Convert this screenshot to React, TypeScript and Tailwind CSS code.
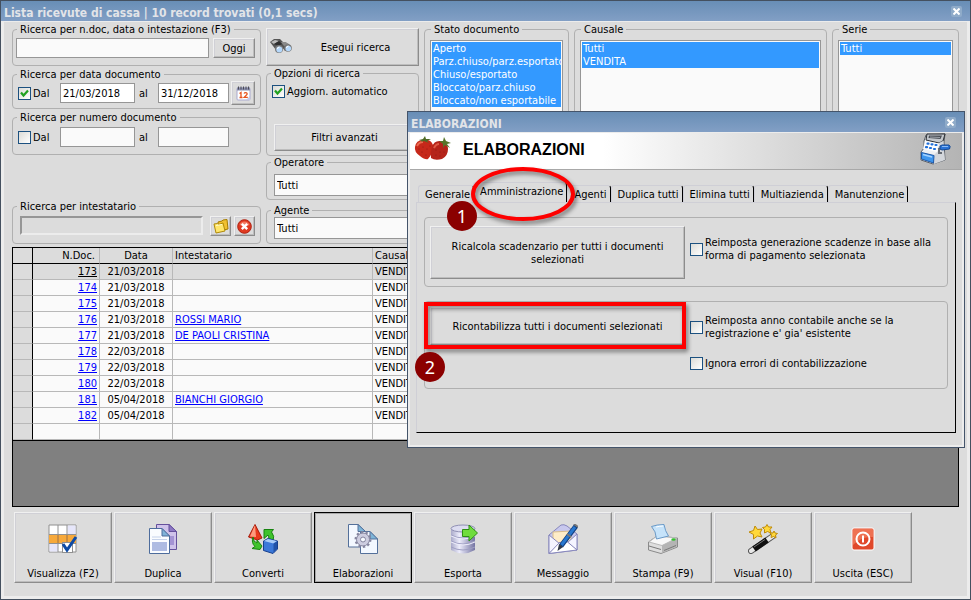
import React, { useState } from 'react';

interface Documento { numero: string; data: string; intestatario: string; }

const documenti: Documento[] = [
    { numero: "173", data: "21/03/2018", intestatario: "" },
    { numero: "174", data: "21/03/2018", intestatario: "" },
    { numero: "175", data: "21/03/2018", intestatario: "" },
    { numero: "176", data: "21/03/2018", intestatario: "ROSSI MARIO" },
    { numero: "177", data: "21/03/2018", intestatario: "DE PAOLI CRISTINA" },
    { numero: "178", data: "22/03/2018", intestatario: "" },
    { numero: "179", data: "22/03/2018", intestatario: "" },
    { numero: "180", data: "22/03/2018", intestatario: "" },
    { numero: "181", data: "05/04/2018", intestatario: "BIANCHI GIORGIO" },
    { numero: "182", data: "05/04/2018", intestatario: "" },
];

const stati = ["Aperto", "Parz.chiuso/parz.esportato", "Chiuso/esportato", "Bloccato/parz.chiuso", "Bloccato/non esportabile"];
const schede = ["Generale", "Amministrazione", "Agenti", "Duplica tutti", "Elimina tutti", "Multiazienda", "Manutenzione"];

const rilievo = 'border border-t-[#f0f0f0] border-l-[#f0f0f0] border-r-[#8c8c8c] border-b-[#8c8c8c] bg-[#dcdcdc] shadow-[inset_-1px_-1px_0_#bdbdbd,inset_1px_1px_0_#d0d0d6]';
const campo = 'border border-[#969696] bg-[#fafafa] outline-none';

// ---- icone ----

const IconaBinocolo = () => (
    <svg width="24" height="18" viewBox="0 0 24 18">
        <path d="M1 4 L5 1 L11 1 L14 4 L20 6 L22 11 L16 13 L13 9 L10 10 L7 12 L4 8 Z" fill="#555" />
        <path d="M2 4 L6 2 L10 3 L5 6 Z" fill="#bcbcbc" />
        <path d="M12 4 L17 4 L20 7 L15 8 Z" fill="#8a8a8a" />
        <path d="M5 6 L10 3 L13 6 L9 8 Z" fill="#2f2f2f" />
        <circle cx="10" cy="11" r="4" fill="#777" />
        <circle cx="10.300" cy="11.500" r="3" fill="#b5d8fb" />
        <circle cx="19" cy="10" r="3.800" fill="#777" />
        <circle cx="19.300" cy="10.500" r="2.800" fill="#b5d8fb" />
        <path d="M8.500 11 a2 2 0 0 1 2-2 M17.500 10 a2 2 0 0 1 2-2" stroke="#fff" fill="none" />
    </svg>
);

const IconaCalendario = () => (
    <svg width="15" height="15" viewBox="0 0 15 15">
        <rect x="1" y="2" width="13" height="12" rx="1" fill="#fff" stroke="#a9a9cf" />
        <rect x="1" y="1.500" width="13" height="3" fill="#8b8fae" />
        <path d="M2.500 0.500v3M5 0.500v3M7.500 0.500v3M10 0.500v3M12.500 0.500v3" stroke="#4b4b55" />
        <path d="M10 14 L14 10 V14 Z" fill="#c8c8e4" />
        <path d="M3.500 7.500 L5 6.500 V11.500 M3.500 11.500 H6.500" stroke="#e8541e" strokeWidth="1.300" fill="none" />
        <path d="M8 7.500 Q8.500 6.500 10 6.600 Q11.500 7 11 8.500 L8.200 11.400 H11.800" stroke="#e8541e" strokeWidth="1.300" fill="none" />
    </svg>
);

const IconaCartella = () => (
    <svg width="16" height="15" viewBox="0 0 16 15">
        <path d="M5 3 L9 2 L10 1 L14 0.500 L15 10 L6 12 Z" fill="#f0c030" stroke="#a67c00" />
        <path d="M1 5 L4.500 4.500 L5.500 5.500 L10 4 L12 12 L3 14 Z" fill="#ffe66b" stroke="#b08a08" />
        <path d="M3 6.500 L9 5.500" stroke="#fffbd0" />
    </svg>
);

const IconaAnnulla = () => (
    <svg width="15" height="15" viewBox="0 0 15 15">
        <circle cx="7.500" cy="7.500" r="6.800" fill="#e03a20" stroke="#b02010" />
        <path d="M2.500 6 A5.300 5.300 0 0 1 12.500 6 Q8 8 2.500 6Z" fill="#f27b62" />
        <path d="M4.800 4.800 L10.200 10.200 M10.200 4.800 L4.800 10.200" stroke="#fff" strokeWidth="2.400" />
    </svg>
);

const IconaFragole = () => (
    <svg width="38" height="26" viewBox="0 0 38 26">
        <path d="M1 11 Q2 4 9 4 Q17 3 19 9 Q20 16 14 23 Q11 24 6 20 Q0 16 1 11Z" fill="#c6281a" />
        <path d="M18 11 Q20 4 27 5 Q34 8 34 13 Q34 20 28 23 Q21 25 17 22 Q16 16 18 11Z" fill="#b5241a" />
        <path d="M3 10 Q5 6 9 6" stroke="#ea6a50" strokeWidth="2" fill="none" />
        <path d="M20 12 Q22 8 25 8" stroke="#df5a45" strokeWidth="2" fill="none" />
        <path d="M5 4 L9 3 L11 0 L12 3 L17 3 L13 5 L15 7 L10 5 L7 6 L8 5 Z" fill="#4e6a24" />
        <path d="M25 5 L29 5 L30 1 L32 5 L37 7 L33 8 L36 12 L31 9 L29 12 L29 8 Z" fill="#57752a" />
        <g fill="#8e1a12">
            <circle cx="5" cy="13" r="0.600" /><circle cx="9" cy="11" r="0.600" /><circle cx="8" cy="16" r="0.600" />
            <circle cx="13" cy="13" r="0.600" /><circle cx="12" cy="19" r="0.600" /><circle cx="16" cy="10" r="0.600" />
            <circle cx="22" cy="14" r="0.600" /><circle cx="26" cy="16" r="0.600" /><circle cx="22" cy="19" r="0.600" />
            <circle cx="30" cy="16" r="0.600" /><circle cx="26" cy="20" r="0.600" />
        </g>
    </svg>
);

const IconaCassa = () => (
    <svg width="32" height="32" viewBox="0 0 32 32">
        <path d="M6 2 L25 1 L24 9 L25 27 L13 31 L1 27 L1 19 L4 15 L4 8 Z" fill="#eef0f3" stroke="#5b6068" />
        <path d="M7 1 L25 1 L23 8 L19 10 L6 7 Z" fill="#c3c7cc" stroke="#2c2f33" />
        <path d="M9 2.500 L22 2.500 L20.500 6 L8.500 5 Z" fill="#4a4e55" />
        <path d="M10 4 L20 4.500" stroke="#9aa0a8" />
        <path d="M19 10 L23 8 L25 27 L14 31 L14 22 L18 18 Z" fill="#d3d6db" />
        <path d="M5 8 L19 10.500 L17 19 L3 16 Z" fill="#fbfcfd" />
        <g stroke="#1f6fda" strokeWidth="2.200" strokeLinecap="round">
            <path d="M7.500 10.700h1M11.500 11.300h1M15.500 12h1M6 14.200h1M10 15h1M14 16h1" />
        </g>
        <path d="M1.500 19.500 L14 22.500 L13.500 30 L1.500 26 Z" fill="#3e96ee" stroke="#1c56a6" />
        <path d="M3 21.500 L12 24" stroke="#a4d2ff" strokeWidth="1.500" />
        <path d="M18 16 L24 15 M19 16 V20 H22" stroke="#666b73" strokeWidth="2" fill="none" />
        <path d="M20 13 L22 12 L29 12 Q31 13 29.500 16 L22 17 L20 16 Z" fill="#2b73d6" stroke="#174a94" />
        <path d="M22 13.500 H28" stroke="#8dbcf5" />
    </svg>
);

const IconaVisualizza = () => (
    <svg width="30" height="30" viewBox="0 0 30 30">
        <path d="M1 1 H28 V28 H1 Z" fill="#fff" stroke="#909090" />
        <path d="M19.500 1.500 H27.500 V10 H19.500Z M1.500 20 H10 V27.500 H1.500Z" fill="#e6e6fa" />
        <path d="M1 10.500 H28 V19.500 H1 Z" fill="#f7a93b" />
        <path d="M10 1V28M19 1V28M1 10.500H28M1 19.500H28" stroke="#909090" />
        <path d="M10 11V19M19 11V19" stroke="#cf7d1c" />
        <rect x="14.500" y="18.500" width="10" height="10" fill="#fff" stroke="#909090" />
        <path d="M15 20 L19 26 L28 13" stroke="#0d4aa5" strokeWidth="3" fill="none" />
    </svg>
);

const IconaDuplica = () => (
    <svg width="30" height="30" viewBox="0 0 30 30">
        <path d="M8.500 0.500 H21 L28.500 7.500 V25.500 H8.500 Z" fill="#cfc2ea" stroke="#65509c" />
        <path d="M21 0.500 V7.500 H28.500 Z" fill="#8d78c4" stroke="#65509c" />
        <path d="M21 12h5v9h-5z" fill="#a493d4" />
        <path d="M1.500 4.500 H14 L21.500 12 V29.500 H1.500 Z" fill="#fafcff" stroke="#4d6c9c" />
        <path d="M14 4.500 V12 H21.500 Z" fill="#7fb2d8" stroke="#4d6c9c" />
        <path d="M4 13 H13 M4 15.500 H19" stroke="#c6d2ea" />
        <path d="M4 18 H19 V27 H4Z" fill="#aebbe2" />
    </svg>
);

const IconaConverti = () => (
    <svg width="30" height="30" viewBox="0 0 30 30">
        <path d="M7 0.500 L14 14 L9.500 16 L0.500 13 Z" fill="#e8381c" stroke="#a41c0c" />
        <path d="M7 1 L2 12.500 L8 13 Z" fill="#ff9a7e" />
        <path d="M16 5.500 H25.500 L23.500 8 Q27 12 25 17 L20.500 13.500 Q21 12 20 11 L16 14.500 Z" fill="#3fc32c" stroke="#17830f" />
        <path d="M5 13 Q5 18 9 19 L9 16 L14 22 L12 25.500 L4 24.500 L7 22.500 Q3 19 5 13Z" fill="#3fc32c" stroke="#17830f" />
        <path d="M15.500 17 L20 14.500 L29.500 17 V25 L25 29.500 L15.500 26.500 Z" fill="#3b78d8" stroke="#173f8c" />
        <path d="M16 17 L20 15 L29 17 L25.500 19.500 Z" fill="#a9ccf8" />
        <path d="M25.500 19.500 L29 17.500 V25 L25.500 28.500Z" fill="#2052a8" />
    </svg>
);

const IconaElaborazioni = () => (
    <svg width="30" height="30" viewBox="0 0 30 30">
        <path d="M0.500 0.500 H10 L17.500 7.500 V23 H0.500 Z" fill="#f3f8ff" stroke="#54709a" />
        <path d="M10 0.500 V7.500 H17.500 Z" fill="#7db5d8" stroke="#54709a" />
        <path d="M12.500 7.500 H22 L29.500 15 V29.500 H12.500 Z" fill="#f3f8ff" stroke="#54709a" />
        <path d="M22 7.500 V15 H29.500 Z" fill="#7db5d8" stroke="#54709a" />
        <circle cx="15" cy="15.500" r="7" fill="none" stroke="#85859f" strokeWidth="3" strokeDasharray="2.200 2.200" />
        <circle cx="15" cy="15.500" r="6.500" fill="#cdcde0" stroke="#85859f" />
        <circle cx="15" cy="15.500" r="2.500" fill="#f6faff" stroke="#85859f" />
    </svg>
);

const IconaEsporta = () => (
    <svg width="30" height="30" viewBox="0 0 30 30">
        <defs>
            <linearGradient id="cilindro"><stop offset="0" stopColor="#aaaaca" /><stop offset="0.350" stopColor="#ececfb" /><stop offset="1" stopColor="#7474a2" /></linearGradient>
        </defs>
        <path d="M3 4 V26 Q15 33 27 26 V4 Z" fill="url(#cilindro)" />
        <ellipse cx="15" cy="4.500" rx="12" ry="3.500" fill="#dcdcf0" stroke="#9090b4" />
        <path d="M3 11 Q15 17 27 11 M3 17 Q15 23 27 17 M3 23 Q15 29 27 23" stroke="#a0a0c4" fill="none" />
        <path d="M3 12 Q15 18 27 12 M3 18 Q15 24 27 18" stroke="#ececfa" fill="none" />
        <path d="M14.500 5.500 H21 V1 L29.500 9 L21 17 V12.500 H14.500 Z" fill="#6fdc3c" stroke="#2f8f14" />
    </svg>
);

const IconaMessaggio = () => (
    <svg width="30" height="30" viewBox="0 0 30 30">
        <path d="M1 11 L13 1 Q16 0 19 2 L29 10 V26 L1 29.500 Z" fill="#c8c8ee" stroke="#8787bc" />
        <path d="M5 8 L23 7 V19 L13 21 L5 16 Z" fill="#ffedc8" stroke="#d8bd8c" />
        <path d="M1 11 L12 20 L1 29.500 Z M29 10 L19 19 L29 26 Z" fill="#f4f4ff" stroke="#8787bc" />
        <path d="M1 29.500 L12 18 L15 20 L19 17.500 L29 26 Z" fill="#fff" stroke="#8787bc" />
        <path d="M28 2 L13 22" stroke="#123f80" strokeWidth="5" />
        <path d="M27 3 L13.500 21" stroke="#2878d0" strokeWidth="3" />
        <path d="M26 0 L30 3 M19 10 L23 13" stroke="#777" strokeWidth="2" />
        <path d="M11 20 L15 23 L9.500 27 Z" fill="#303848" />
    </svg>
);

const IconaStampa = () => (
    <svg width="30" height="30" viewBox="0 0 30 30">
        <path d="M0.500 18 L9 12 L29.500 14 V23 L13 29.500 L0.500 26 Z" fill="#dedede" stroke="#8a8a8a" />
        <path d="M1 18 L9 12 L29 14 L14 21.500 Z" fill="#f8f8f8" stroke="#b8b8b8" />
        <path d="M14 21.500 L29 14.500 V22.500 L14 29 Z" fill="#b4b4b4" />
        <path d="M3.500 2.500 Q9 0.500 16 0.500 Q17 7 20.500 12 L8.500 15 Q8 7 3.500 2.500Z" fill="#c6e3fa" stroke="#6a9ac8" />
        <path d="M8 3 Q12 2 15 2" stroke="#fff" fill="none" />
        <path d="M1 22 L13 25.500 M16 26.500 L28 21.500" stroke="#7a7a7a" fill="none" />
        <ellipse cx="25.500" cy="15.500" rx="2.200" ry="1.300" fill="#35c030" />
    </svg>
);

const IconaVisual = () => (
    <svg width="30" height="30" viewBox="0 0 30 30">
        <path d="M3 27 L25 12" stroke="#555" strokeWidth="6" strokeLinecap="round" />
        <path d="M3 27 L25 12" stroke="#e8e8e8" strokeWidth="4" strokeLinecap="round" />
        <path d="M6 25 L19 16" stroke="#101010" strokeWidth="6" />
        <path d="M6 23 L17 15.500" stroke="#777" />
        <g fill="#ffd83b" stroke="#bf8b09">
            <path d="M7 2 L9.500 5.500 L14 5 L12 9 L14 13 L9.500 12 L5.500 15 L5.500 10.500 L1 8 L5.500 6.500 Z" />
            <path d="M19 0.500 L20.500 3 L24 3 L22 5.500 L23 9 L19.500 7.500 L16.500 9 L16.500 5.500 L14.500 3.500 L17.500 3 Z" />
            <path d="M26 7 L27 9 L29.500 9.500 L27.500 11 L28 14 L25.500 12.500 L23 13.500 L23.500 11 L22 9 L25 9 Z" />
        </g>
    </svg>
);

const IconaUscita = () => (
    <svg width="30" height="30" viewBox="0 0 30 30">
        <rect x="4" y="4" width="22" height="22" rx="2" fill="#e0482a" stroke="#fff" />
        <path d="M5 5 H25 V13 Q14 12 5 21 Z" fill="#ee7152" />
        <circle cx="15" cy="15" r="6.500" fill="none" stroke="#fff" strokeWidth="2" />
        <path d="M15 11.500 V18.500" stroke="#fff" strokeWidth="2" />
    </svg>
);

const azioni = [
    { nome: "Visualizza (F2)", icona: <IconaVisualizza /> },
    { nome: "Duplica", icona: <IconaDuplica /> },
    { nome: "Converti", icona: <IconaConverti /> },
    { nome: "Elaborazioni", icona: <IconaElaborazioni /> },
    { nome: "Esporta", icona: <IconaEsporta /> },
    { nome: "Messaggio", icona: <IconaMessaggio /> },
    { nome: "Stampa (F9)", icona: <IconaStampa /> },
    { nome: "Visual (F10)", icona: <IconaVisual /> },
    { nome: "Uscita (ESC)", icona: <IconaUscita /> },
];

// ---- controlli ----

const BarraTitolo = ({ children }: { children: React.ReactNode }) => (
    <div className="flex h-5 items-center justify-between bg-linear-to-b from-[#688eb6] to-[#829fc5] pt-1 pr-2 pl-[3px] text-[12px] font-bold text-[#e2e4e8]">
        {children}
        <button type="button" aria-label="Chiudi" className="mb-1 flex size-[11px] items-center justify-center rounded-[2px] bg-[#8fabc9]">
            <svg width="7" height="7" viewBox="0 0 7 7"><path d="M0.500 0.500 L6.500 6.500 M6.500 0.500 L0.500 6.500" stroke="#fff" strokeWidth="2" /></svg>
        </button>
    </div>
);

const Gruppo = ({ titolo, className, children }: { titolo: string; className: string; children: React.ReactNode }) => (
    <fieldset className={`min-w-0 rounded-[4px] border border-[#b0b0b0] ${className}`}>
        <legend className="ml-px px-[3px]">{titolo}</legend>
        {children}
    </fieldset>
);

const Casella = ({ testo, attiva = false }: { testo: string; attiva?: boolean }) => {
    const [spunta, setSpunta] = useState(attiva);
    return (
        <label className="flex items-center gap-[2px]">
            <span className="grid shrink-0 place-items-center">
                <input
                    type="checkbox"
                    checked={spunta}
                    onChange={(e) => setSpunta(e.target.checked)}
                    className="col-start-1 row-start-1 size-[13px] appearance-none border border-[#1c5180] bg-linear-to-br from-[#dcdcd7] to-white"
                />
                {spunta && (
                    <svg width="9" height="9" viewBox="0 0 9 9" className="pointer-events-none col-start-1 row-start-1">
                        <path d="M1 3.500 L3.500 6.500 L8 1.500" stroke="#21a121" strokeWidth="2.200" fill="none" />
                    </svg>
                )}
            </span>
            <span>{testo}</span>
        </label>
    );
};

const Lista = ({ nome, voci }: { nome: string; voci: string[] }) => (
    <select
        multiple
        aria-label={nome}
        defaultValue={voci}
        className={`mt-1 block h-[196px] w-full overflow-hidden p-px ${campo}`}
    >
        {voci.map(voce => (
            <option key={voce} value={voce} className="h-[13px] min-h-0 overflow-hidden p-0 pl-px leading-[13px] checked:bg-linear-to-b checked:from-[#3399ff] checked:to-[#3399ff] checked:[-webkit-text-fill-color:white]">
                {voce}
            </option>
        ))}
    </select>
);

const Elaborazioni = () => {
    const [scheda, setScheda] = useState('Amministrazione');

    return (
        <div role="dialog" aria-label="ELABORAZIONI" className="absolute top-[110px] left-[406px] flex h-[337px] w-[558px] flex-col border border-[#44546a] bg-[#dcdcdc]">
            <BarraTitolo><span>ELABORAZIONI</span></BarraTitolo>
            <div className="flex flex-1 flex-col border-2 border-t border-[#ececec]">
                <div className="flex h-[37px] items-center border-b border-[#a8a8a8] bg-linear-to-r from-white from-35% to-[#b4b4b4] pr-2.5 pb-1 pl-1">
                    <IconaFragole />
                    <h2 className="ml-[11px] flex-1 font-['Liberation_Sans',sans-serif] text-[16px] font-bold">ELABORAZIONI</h2>
                    <IconaCassa />
                </div>

                <div role="tablist" className="flex h-8 items-end pl-2">
                    {schede.map(nome => (
                        <button
                            key={nome}
                            type="button"
                            role="tab"
                            aria-selected={scheda === nome}
                            onClick={() => setScheda(nome)}
                            className={`rounded-t-[3px] border-t border-r border-l border-t-[#cfcfd6] border-l-[#cfcfd6] border-r-black bg-[#dcdcdc] pr-[3px] pl-[6px] whitespace-nowrap ${scheda === nome ? '-ml-px h-5 pb-0.5' : 'h-[17px]'}`}
                        >
                            {nome}
                        </button>
                    ))}
                </div>

                <div className="mx-1.5 mb-3 flex flex-1 flex-col gap-3.5 border border-t-[#cfcfd6] border-r-black border-b-black border-l-[#cfcfd6] px-[7px] pt-3.5">
                    <div className="grid h-[70px] grid-cols-[255px_1fr] items-start gap-[5px] rounded-[4px] border border-[#b0b0b0] px-[5px] pt-2">
                        <button type="button" className={`h-[53px] px-4 ${rilievo}`}>Ricalcola scadenzario per tutti i documenti selezionati</button>
                        <div className="pt-[10px]">
                            <Casella testo="Reimposta generazione scadenze in base alla forma di pagamento selezionata" />
                        </div>
                    </div>
                    <div className="grid h-[88px] grid-cols-[255px_1fr] items-start gap-[5px] rounded-[4px] border border-[#b0b0b0] px-[5px] pt-[5px]">
                        <button type="button" className={`h-[38px] ${rilievo}`}>Ricontabilizza tutti i documenti selezionati</button>
                        <div className="flex flex-col gap-[17px] pt-[7px] pr-12">
                            <Casella testo="Reimposta anno contabile anche se la registrazione e' gia' esistente" />
                            <Casella testo="Ignora errori di contabilizzazione" />
                        </div>
                    </div>
                </div>
            </div>
        </div>
    );
};

// segni rossi sopra la finestra: i passi da seguire
const Passi = () => (
    <div className="pointer-events-none">
        <svg width="114" height="64" viewBox="0 0 114 64" className="absolute top-[163px] left-[467px] drop-shadow-[2px_3px_2px_rgba(0,0,0,0.45)]">
            <ellipse cx="55" cy="30" rx="50" ry="25" fill="none" stroke="#fe0000" strokeWidth="4" />
        </svg>
        <div className="absolute top-[301px] left-[423px] h-[47px] w-[262px] border-4 border-[#fe0000] drop-shadow-[2px_3px_2px_rgba(0,0,0,0.45)]"></div>
        <div className="absolute top-[200px] left-[446px] flex size-[30px] items-center justify-center rounded-full bg-[#8b0000] font-['Noto_Sans',sans-serif] text-[18px] text-white">1</div>
        <div className="absolute top-[351px] left-[414px] flex size-[30px] items-center justify-center rounded-full bg-[#8b0000] font-['Noto_Sans',sans-serif] text-[18px] text-white">2</div>
    </div>
);

const App: React.FC = () => {
    const [ricerca, setRicerca] = useState('');
    const [dal, setDal] = useState('21/03/2018');
    const [al, setAl] = useState('31/12/2018');

    return (
        <div className="relative flex min-h-screen flex-col border border-[#44505f] bg-[#dcdcdc] font-['DejaVu_Sans_Condensed','Noto_Sans',sans-serif] text-[11px] leading-[13px] text-black">
            <BarraTitolo><h1>Lista ricevute di cassa | 10 record trovati (0,1 secs)</h1></BarraTitolo>

            <div className="flex flex-1 flex-col border-3 border-t border-[#ececec] px-2 pt-px pb-[13px]">
                <div className="flex h-[221px] gap-[5px]">
                    <div className="flex w-[249px] shrink-0 flex-col gap-[2px]">
                        <Gruppo titolo="Ricerca per n.doc, data o intestazione (F3)" className="px-[3px] pt-[2px] pb-[7px]">
                            <div className="flex gap-1 pr-[2px]">
                                <input aria-label="Ricerca" value={ricerca} onChange={(e) => setRicerca(e.target.value)} className={`h-5 min-w-0 flex-1 px-1 ${campo}`} />
                                <button type="button" className={`h-5 w-[42px] ${rilievo}`}>Oggi</button>
                            </div>
                        </Gruppo>

                        <Gruppo titolo="Ricerca per data documento" className="px-[3px] pb-[3px]">
                            <div className="flex items-center pr-[2px] pl-[2px]">
                                <div className="w-[42px]"><Casella testo="Dal" attiva /></div>
                                <input aria-label="Dal giorno" value={dal} onChange={(e) => setDal(e.target.value)} className="h-5 w-[75px] border border-[#969696] bg-white px-[2px] outline-none" />
                                <span className="w-[23px] pl-1">al</span>
                                <input aria-label="Al giorno" value={al} onChange={(e) => setAl(e.target.value)} className="h-5 w-[71px] border border-[#969696] bg-white px-[2px] outline-none" />
                                <button type="button" aria-label="Calendario" className={`ml-auto flex size-6 items-center justify-center ${rilievo}`}><IconaCalendario /></button>
                            </div>
                        </Gruppo>

                        <Gruppo titolo="Ricerca per numero documento" className="px-[3px] pt-[3px] pb-[7px]">
                            <div className="flex items-center pl-[2px]">
                                <div className="w-[42px]"><Casella testo="Dal" /></div>
                                <input aria-label="Dal numero" className={`h-5 w-[75px] px-[2px] ${campo}`} />
                                <span className="w-[23px] pl-1">al</span>
                                <input aria-label="Al numero" className={`h-5 w-[71px] px-[2px] ${campo}`} />
                            </div>
                        </Gruppo>

                        <Gruppo titolo="Ricerca per intestatario" className="mt-auto px-[3px] pt-[3px] pb-[7px]">
                            <div className="flex gap-[3px] pr-[2px] pl-1">
                                <input aria-label="Intestatario" readOnly className="mr-1 h-[19px] min-w-0 flex-1 border-2 border-t-[#969696] border-r-[#ececec] border-b-[#ececec] border-l-[#969696] bg-[#dcdcdc]" />
                                <button type="button" aria-label="Apri" className={`flex h-5 w-[21px] items-center justify-center ${rilievo}`}><IconaCartella /></button>
                                <button type="button" aria-label="Annulla" className={`flex h-5 w-[21px] items-center justify-center ${rilievo}`}><IconaAnnulla /></button>
                            </div>
                        </Gruppo>
                    </div>

                    <div className="flex w-[153px] shrink-0 flex-col">
                        <button type="button" className={`mt-[5px] mb-px flex h-[38px] shrink-0 items-center pl-[2px] ${rilievo}`}>
                            <IconaBinocolo />
                            <span className="flex-1">Esegui ricerca</span>
                        </button>
                        <Gruppo titolo="Opzioni di ricerca" className="h-[89px] px-[3px] pt-[5px]">
                            <div className="flex flex-col gap-[26px] pl-[2px]">
                                <Casella testo="Aggiorn. automatico" attiva />
                                <button type="button" className={`ml-[2px] h-[27px] ${rilievo}`}>Filtri avanzati</button>
                            </div>
                        </Gruppo>
                        <Gruppo titolo="Operatore" className="h-11 px-[3px] pt-[5px]">
                            <select aria-label="Operatore" className={`ml-1 h-[22px] w-[136px] appearance-none px-[2px] ${campo}`}><option>Tutti</option></select>
                        </Gruppo>
                        <Gruppo titolo="Agente" className="mt-auto h-10 px-[3px]">
                            <select aria-label="Agente" className={`ml-1 h-[22px] w-[136px] appearance-none px-[2px] ${campo}`}><option>Tutti</option></select>
                        </Gruppo>
                    </div>

                    <Gruppo titolo="Stato documento" className="w-[145px] shrink-0 px-[5px]"><Lista nome="Stato documento" voci={stati} /></Gruppo>
                    <Gruppo titolo="Causale" className="flex-1 px-[5px]"><Lista nome="Causale" voci={["Tutti", "VENDITA"]} /></Gruppo>
                    <Gruppo titolo="Serie" className="w-[127px] shrink-0 px-[5px]"><Lista nome="Serie" voci={["Tutti"]} /></Gruppo>
                </div>

                <div className="mt-[3px] flex-1 border border-black bg-[#808080]">
                    <table className="w-full table-fixed border-separate border-spacing-0 border-b border-black bg-[#fafafa]">
                        <thead>
                            <tr className="h-4 bg-[#dcdcdc] text-left">
                                <th className="w-5 border-r border-b border-black p-0"></th>
                                <th className="w-[67px] border-r border-b border-r-[#b8b8b8] border-b-black p-0 pr-1 text-right font-normal">N.Doc.</th>
                                <th className="w-[73px] border-r border-b border-r-[#b8b8b8] border-b-black p-0 text-center font-normal">Data</th>
                                <th className="w-[200px] border-r border-b border-r-[#b8b8b8] border-b-black p-0 pl-[2px] font-normal">Intestatario</th>
                                <th className="border-b border-black p-0 pl-[2px] font-normal">Causale</th>
                            </tr>
                        </thead>
                        <tbody>
                            {documenti.map((doc, i) => (
                                <tr key={doc.numero} className={`h-4 ${i === 0 ? 'bg-[#dcdcdc]' : ''}`}>
                                    <td className="border-r border-b border-r-black border-b-[#b8b8b8] bg-[#dcdcdc] p-0"></td>
                                    <td className="border-r border-b border-[#b8b8b8] p-0 pr-[2px] text-right">
                                        <a href={`#${doc.numero}`} className={`underline ${i === 0 ? 'text-black' : 'text-[#0000ff]'}`}>{doc.numero}</a>
                                    </td>
                                    <td className="border-r border-b border-[#b8b8b8] p-0 text-center">{doc.data}</td>
                                    <td className="border-r border-b border-[#b8b8b8] p-0 pl-[2px]">
                                        {doc.intestatario && <a href={`#${doc.numero}`} className="text-[#0000ff] underline">{doc.intestatario}</a>}
                                    </td>
                                    <td className="border-b border-[#b8b8b8] p-0 pl-[2px]">VENDITA</td>
                                </tr>
                            ))}
                            <tr className="h-4">
                                <td className="border-r border-b border-r-black border-b-[#b8b8b8] bg-[#dcdcdc] p-0"></td>
                                <td className="border-r border-b border-[#b8b8b8] p-0"></td>
                                <td className="border-r border-b border-[#b8b8b8] p-0"></td>
                                <td className="border-r border-b border-[#b8b8b8] p-0"></td>
                                <td className="border-b border-[#b8b8b8] p-0"></td>
                            </tr>
                        </tbody>
                    </table>
                </div>

                <div className="mt-[5px] flex gap-[2px] pl-[2px]">
                    {azioni.map(azione => (
                        <button
                            key={azione.nome}
                            type="button"
                            className={`flex h-[71px] w-[98px] flex-col items-center justify-between pt-[11px] pb-[2px] ${azione.nome === 'Elaborazioni' ? 'border border-black bg-[#dcdcdc] inset-ring inset-ring-[#a8a8a8]' : rilievo}`}
                        >
                            {azione.icona}
                            <span>{azione.nome}</span>
                        </button>
                    ))}
                </div>
            </div>

            <Elaborazioni />
            <Passi />
        </div>
    );
};

export default App;
